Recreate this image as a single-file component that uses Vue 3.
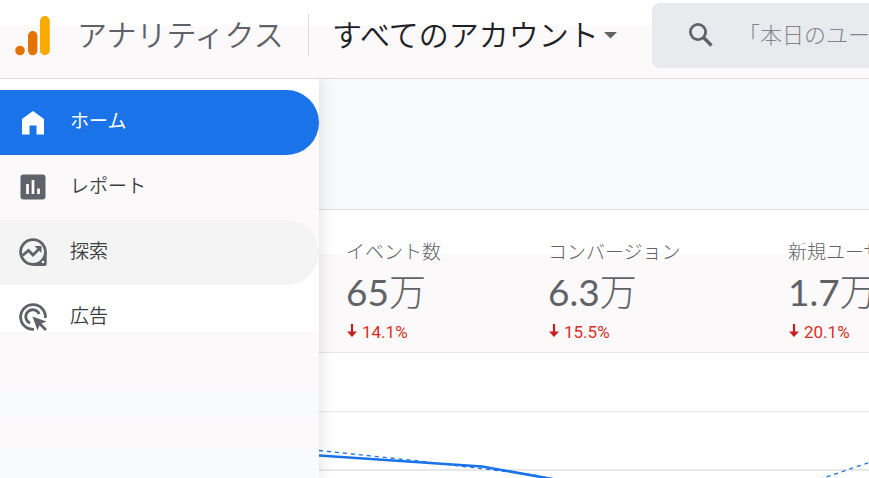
<script setup>
import { ref } from 'vue'

const active = ref('home')
const query = ref('')
const menu = [
  { id: 'home', label: 'ホーム' },
  { id: 'reports', label: 'レポート' },
  { id: 'explore', label: '探索', hovered: true },
  { id: 'ads', label: '広告' },
]
const metrics = [
  { label: 'イベント数', number: '65', unit: '万', change: '14.1%' },
  { label: 'コンバージョン', number: '6.3', unit: '万', change: '15.5%' },
  { label: '新規ユーザー数', number: '1.7', unit: '万', change: '20.1%' },
]
</script>

<template>
  <div class="app">
    <header class="topbar">
      <a class="brand" href="#">
        <svg class="logo" width="36" height="42" viewBox="0 0 36 42" aria-hidden="true">
          <circle cx="5" cy="36.500" r="4.800" fill="#e37400" />
          <rect x="13" y="17" width="9.400" height="24.300" rx="4.700" fill="#e37400" />
          <rect x="25" y="2" width="9.800" height="39.300" rx="4.900" fill="#f9ab00" />
        </svg>
        <span class="title">アナリティクス</span>
      </a>
      <button class="account" type="button">
        <span class="title">すべてのアカウント</span>
        <svg width="13" height="7" viewBox="0 0 13 7" aria-hidden="true"><path d="M0 0h13L6.500 6.500z" fill="#5f6368" /></svg>
      </button>
      <label class="search">
        <svg width="26" height="26" viewBox="0 0 26 26" fill="none" stroke="#5f6368" aria-hidden="true">
          <circle cx="10" cy="9" r="7.600" stroke-width="2.800" />
          <path d="M15.500 14.500L23.500 22.500" stroke-width="3.400" />
        </svg>
        <input v-model="query" type="text" aria-label="検索" placeholder="「本日のユーザー数」と検索してみてください" />
      </label>
    </header>

    <div class="body">
      <nav class="sidebar">
        <a
          v-for="item in menu"
          :key="item.id"
          href="#"
          class="item"
          :class="{ active: active === item.id, hovered: item.hovered }"
          @click.prevent="active = item.id"
        >
          <svg v-if="item.id === 'home'" class="icon" viewBox="0 0 30 30" aria-hidden="true">
            <path d="M4 11L15 3l11 8v15.500h-7.500v-9h-7v9H4z" fill="currentColor" />
          </svg>
          <svg v-else-if="item.id === 'reports'" class="icon" viewBox="0 0 30 30" aria-hidden="true">
            <rect x="2.500" y="1.500" width="25" height="25" rx="3" fill="#5f6368" />
            <path d="M9.500 11v10M15 7v14M20.500 15.500V21" stroke="#fff" stroke-width="2.700" />
          </svg>
          <svg v-else-if="item.id === 'explore'" class="icon" viewBox="0 0 30 30" fill="none" stroke="#5f6368" aria-hidden="true">
            <circle cx="15" cy="14" r="12.400" stroke-width="2.800" />
            <path d="M27.400 14v11.400q0 1.200-1.200 1.200H15" stroke-width="2.600" />
            <path d="M19.500 26.500L27.500 18.500v8z" fill="#5f6368" stroke="none" />
            <circle cx="25" cy="24" r="1.300" fill="#f4f4f4" stroke="none" />
            <path d="M4.500 17.500L10.500 12.500L15 17L21.500 10.500" stroke-width="2.800" />
            <path d="M16.500 8H23.500V15z" fill="#5f6368" stroke="none" />
          </svg>
          <svg v-else class="icon" viewBox="0 0 30 30" fill="none" stroke="#5f6368" stroke-width="2.800" aria-hidden="true">
            <path d="M16 26.400A12.400 12.400 0 1 1 27.400 15" />
            <path d="M12 20.200A7 7 0 1 1 21.200 11" />
            <path d="M14.500 13.500L28.500 18.500L23.500 20.500L29 26L27 28L21.500 22.500L19.500 27.500z" fill="#5f6368" stroke="none" />
          </svg>
          <span class="label">{{ item.label }}</span>
        </a>
      </nav>

      <main class="main">
        <div class="spacer"></div>
        <section class="metrics">
          <div v-for="m in metrics" :key="m.label" class="metric">
            <div class="name">{{ m.label }}</div>
            <div class="value">{{ m.number }}<span class="unit">{{ m.unit }}</span></div>
            <div class="change">
              <svg width="12" height="16" viewBox="0 0 12 16" aria-hidden="true">
                <path d="M6 0v11" stroke="#c5221f" stroke-width="2.200" />
                <path d="M1 7.500h10L6 13z" fill="#c5221f" />
              </svg>
              <span>{{ m.change }}</span>
            </div>
          </div>
        </section>
        <section class="chart">
          <svg width="550" height="125" viewBox="0 0 550 125" fill="none" aria-hidden="true">
            <path d="M0 58.500H550" stroke="#e8eaed" />
            <path d="M0 117H550" stroke="#e8e8e8" stroke-width="2" />
            <path d="M0 97.500L100 108L215 122L240 127" stroke="#1a73e8" stroke-width="1.300" stroke-dasharray="4 4" />
            <path d="M500 126.500L550 109.500" stroke="#1a73e8" stroke-width="1.300" stroke-dasharray="4 4" />
            <path d="M0 102.500L163 113.500L250 129" stroke="#1a73e8" stroke-width="2.600" stroke-linejoin="round" />
          </svg>
        </section>
      </main>
    </div>
  </div>
</template>

<style>
body {
  margin: 0;
  overflow: hidden;
}
</style>

<style scoped>
.app {
  display: flex;
  flex-direction: column;
  height: 100vh;
  overflow: hidden;
  font-family: "Noto Sans CJK JP", sans-serif;
  font-weight: 300;
  color: #5f6368;
  background: #fff;
}
.topbar {
  display: flex;
  flex: none;
  align-items: flex-start;
  height: 78px;
  border-bottom: 1px solid #dadce0;
  background: linear-gradient(#fff 26px, #fcf9fa 26px);
}
.brand {
  display: flex;
  flex: none;
  align-items: center;
  box-sizing: border-box;
  width: 309px;
  height: 42px;
  margin-top: 14px;
  padding-left: 15px;
  gap: 26px;
  border-right: 1px solid #dadce0;
  font-size: 30px;
  color: #5f6368;
  text-decoration: none;
  white-space: nowrap;
}
.title {
  padding-bottom: 4px;
  font-weight: 350;
  line-height: 38px;
}
.account {
  display: flex;
  flex: none;
  align-items: center;
  box-sizing: border-box;
  width: 343px;
  height: 42px;
  margin-top: 14px;
  padding: 0 0 0 23px;
  gap: 5px;
  border: 0;
  background: none;
  font: inherit;
  font-size: 30px;
  color: #202124;
  white-space: nowrap;
}
.search {
  display: flex;
  flex: 1;
  align-items: center;
  box-sizing: border-box;
  min-width: 0;
  height: 65px;
  margin-top: 3px;
  padding-left: 36px;
  gap: 24px;
  border-radius: 8px 0 0 8px;
  background: #e8eaed;
}
.search svg {
  flex: none;
}
.search input {
  flex: 1;
  min-width: 0;
  padding: 0 0 6px;
  border: 0;
  outline: 0;
  background: none;
  font: inherit;
  font-size: 22px;
  color: #202124;
}
.search input::placeholder {
  color: #80868b;
  opacity: 1;
}
.body {
  display: flex;
  flex: 1;
  min-height: 0;
}
.sidebar {
  position: relative;
  z-index: 1;
  flex: none;
  box-sizing: border-box;
  width: 319px;
  padding-top: 11px;
  background: linear-gradient(#fff 60px, #fcf9fa 60px, #fcf9fa 160px, #fff 160px, #fff 253px, #fcf9fa 253px, #fcf9fa 311px, #f9fafd 311px, #f9fafd 339px, #fcf9fa 339px, #fcf9fa 369px, #f9fafd 369px);
  box-shadow: 0 0 15px rgba(60, 64, 67, 0.18);
  clip-path: inset(0 -20px 0 0);
}
.item {
  display: flex;
  align-items: center;
  height: 65px;
  padding-left: 18px;
  gap: 22px;
  border-radius: 0 33px 33px 0;
  font-size: 19px;
  line-height: 28px;
  color: #3c4043;
  text-decoration: none;
}
.label {
  padding-bottom: 6px;
  font-weight: 350;
}
.item.hovered {
  background: #f4f4f4;
}
.item.active {
  background: #1a73e8;
  color: #fff;
}
.item.active .label {
  font-weight: 400;
}
.icon {
  flex: none;
  width: 30px;
  height: 30px;
}
.main {
  display: flex;
  flex: 1;
  flex-direction: column;
  min-width: 0;
  overflow: hidden;
}
.spacer {
  flex: none;
  height: 130px;
  border-bottom: 1px solid #dadce0;
  background: #f8f9fb;
}
.metrics {
  display: grid;
  flex: none;
  grid-template-columns: 202px 240px 240px;
  box-sizing: border-box;
  height: 143px;
  padding: 27px 0 0 27px;
  border-bottom: 1px solid #e8eaed;
  background: linear-gradient(#fff 44px, #fcf9fa 44px);
}
.metric {
  white-space: nowrap;
}
.name {
  font-size: 19px;
  line-height: 28px;
}
.value {
  height: 56px;
  font-family: Lato, "Noto Sans CJK JP", sans-serif;
  font-size: 37px;
  font-weight: 400;
  line-height: 50px;
}
.unit {
  font-family: "Noto Sans CJK JP", sans-serif;
  font-weight: 300;
}
.change {
  display: flex;
  align-items: center;
  gap: 4px;
  font-family: Roboto, sans-serif;
  font-size: 17px;
  font-weight: 400;
  line-height: 22px;
  color: #d93025;
}
.chart {
  flex: 1;
  min-height: 0;
  overflow: hidden;
  background: #fff;
}
.chart svg {
  display: block;
}
</style>
